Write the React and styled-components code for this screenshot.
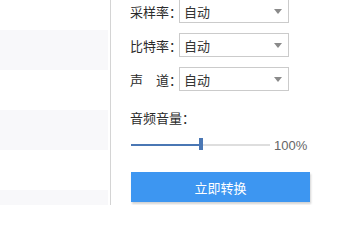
import styled, { createGlobalStyle } from 'styled-components'

const GlobalStyle = createGlobalStyle`
  html, body {
    margin: 0;
    padding: 0;
    background: #fff;
  }
  body {
    font-family: "Noto Sans CJK SC", "Liberation Sans", sans-serif;
    font-size: 13px;
    color: #2b2b2b;
  }
`

const Page = styled.div`
  display: flex;
  width: 341px;
  height: 205px;
  overflow: hidden;
  background: #fff;
`

const FileList = styled.div`
  width: 108px;
  padding-right: 2px;
  border-right: 1px solid #d4d4d4;
  display: flex;
  flex-direction: column;
  margin-top: -10px;
`

const FileRow = styled.div`
  height: 40px;
  flex-shrink: 0;
  background: ${props => (props.striped ? '#f8f8fa' : '#fff')};
`

const Settings = styled.div`
  flex: 1;
  padding-left: 19px;
  display: flex;
  flex-direction: column;
  margin-top: -1px;
`

const FieldRow = styled.div`
  display: flex;
  align-items: center;
  height: 24px;
  margin-bottom: 10px;
`

const Label = styled.span`
  display: flex;
  align-items: center;
  width: 49px;
  font-size: 13px;
  color: #2b2b2b;
  white-space: nowrap;
`

const LabelName = styled.span`
  width: 39px;
  display: flex;
  justify-content: space-between;
`

const Colon = styled.span`
  width: 10px;
  text-align: center;
`

const Select = styled.div`
  box-sizing: border-box;
  width: 110px;
  height: 24px;
  border: 1px solid #cbcbcb;
  background: #fff;
  display: flex;
  align-items: center;
  justify-content: space-between;
  padding: 0 6px 0 4px;
  font-size: 13px;
  color: #333;
`

const Arrow = styled.span`
  width: 0;
  height: 0;
  border-left: 4px solid transparent;
  border-right: 4px solid transparent;
  border-top: 5px solid #8a8a8a;
`

const VolumeLabel = styled.div`
  display: flex;
  margin-top: 8px;
  height: 18px;
  line-height: 18px;
  font-size: 13px;
  color: #2b2b2b;
`

const SliderRow = styled.div`
  display: flex;
  align-items: center;
  height: 14px;
  margin-top: 11px;
  margin-left: 1px;
`

const Track = styled.div`
  position: relative;
  width: 139px;
  height: 2px;
  background: #dedede;
`

const Fill = styled.div`
  height: 100%;
  background: #4a77b4;
`

const Thumb = styled.div`
  position: absolute;
  top: -6px;
  width: 4px;
  height: 12px;
  background: #4a77b4;
`

const Percent = styled.span`
  margin-left: 4px;
  font-family: "Liberation Sans", sans-serif;
  font-size: 13px;
  color: #666;
`

const ConvertButton = styled.button`
  margin-top: 20px;
  margin-left: 1px;
  width: 179px;
  height: 30px;
  border: none;
  background: #3d96f1;
  color: #fff;
  font-family: "Noto Sans CJK SC", sans-serif;
  font-size: 13px;
  box-shadow: 1px 2px 2px rgba(0, 0, 0, 0.18);
  cursor: pointer;
`

const fields = [
  { name: ['采样率'], value: '自动' },
  { name: ['比特率'], value: '自动' },
  { name: ['声', '道'], value: '自动' },
]

export default function App() {
  const volume = 0.5
  return (
    <Page>
      <GlobalStyle />
      <FileList>
        {[0, 1, 2, 3, 4, 5].map(i => (
          <FileRow key={i} striped={i % 2 === 1} />
        ))}
      </FileList>
      <Settings>
        {fields.map(f => (
          <FieldRow key={f.name.join('')}>
            <Label>
              <LabelName>
                {f.name.map(n => (
                  <span key={n}>{n}</span>
                ))}
              </LabelName>
              <Colon>：</Colon>
            </Label>
            <Select>
              <span>{f.value}</span>
              <Arrow />
            </Select>
          </FieldRow>
        ))}
        <VolumeLabel>
          音频音量<Colon>：</Colon>
        </VolumeLabel>
        <SliderRow>
          <Track>
            <Fill style={{ width: `${volume * 100}%` }} />
            <Thumb style={{ left: `${volume * 139 - 2}px` }} />
          </Track>
          <Percent>100%</Percent>
        </SliderRow>
        <ConvertButton>立即转换</ConvertButton>
      </Settings>
    </Page>
  )
}
